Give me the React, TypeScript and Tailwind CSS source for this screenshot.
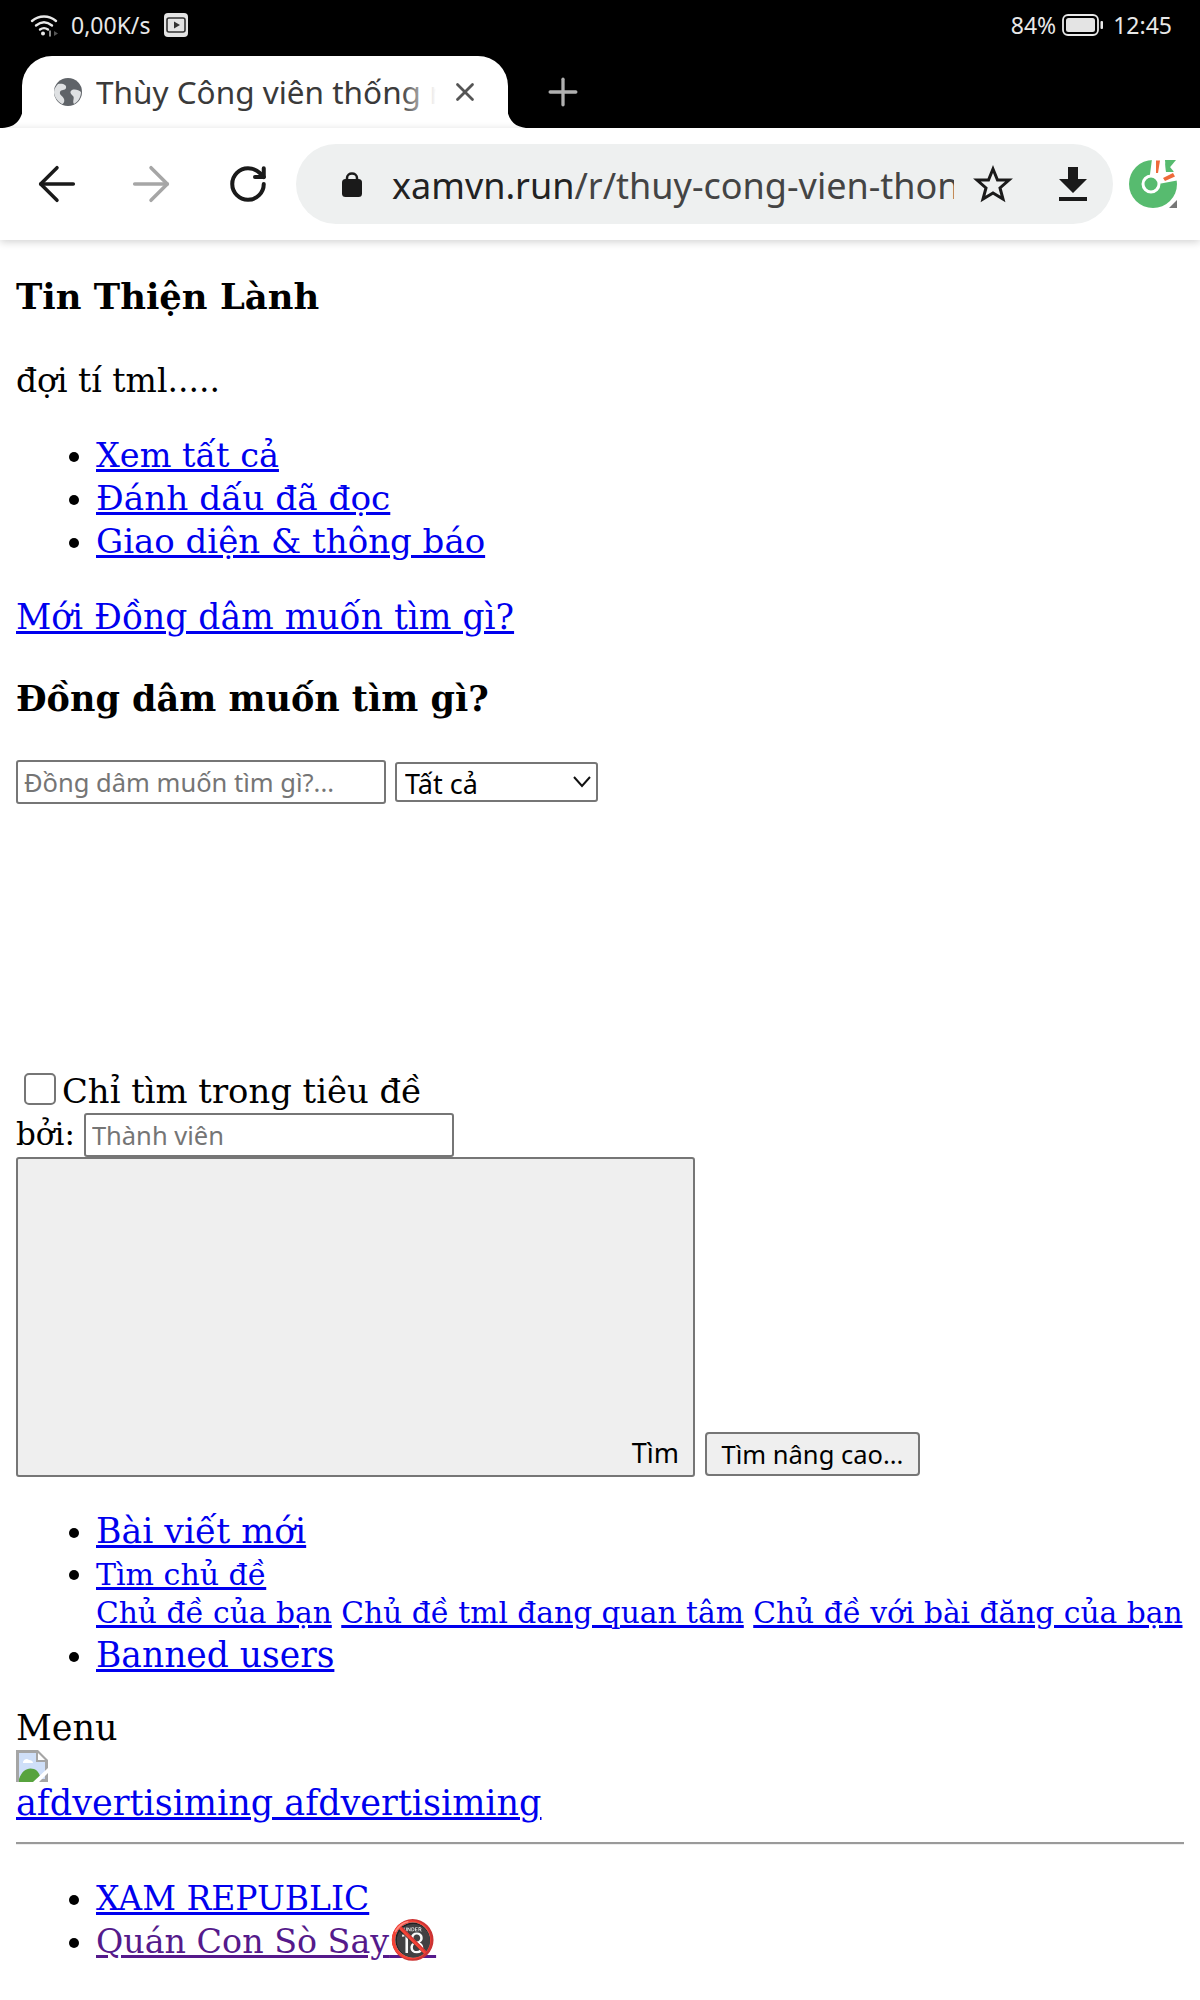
import { ArrowLeft, ArrowRight, Plus, RotateCw, X } from "lucide-react"

const linkClass = "text-[#0000ee] underline decoration-[3px]"

function WifiIcon() {
  return (
    <svg width="28" height="24" viewBox="0 0 28 24" fill="none" stroke="#e8e8e8" strokeWidth="2.4" strokeLinecap="round">
      <path d="M2 8C9 2 19 2 26 8" />
      <path d="M6 12.500C11 8.500 17 8.500 22 12.500" />
      <path d="M10 16.500C12.500 14.800 15.500 14.800 18 16.500" />
      <circle cx="13" cy="20.500" r="2" fill="#e8e8e8" stroke="none" />
      <path d="M20 18V23" stroke="#bbb" strokeWidth="1.500" />
      <path d="M24 18L28 20.500L24 23Z" fill="#555" stroke="none" />
    </svg>
  )
}

function VideoIcon() {
  return (
    <svg width="24" height="24" viewBox="0 0 24 24">
      <rect width="24" height="24" rx="4" fill="#e4e4e4" />
      <rect x="3" y="5" width="18" height="14" rx="2" fill="none" stroke="#333" strokeWidth="1.600" />
      <path d="M10 8.500L16 12L10 15.500Z" fill="#333" />
    </svg>
  )
}

function BatteryIcon() {
  return (
    <svg width="41" height="22" viewBox="0 0 41 22">
      <rect x="1" y="1" width="35" height="20" rx="5" fill="none" stroke="#e8e8e8" strokeWidth="1.800" />
      <rect x="4" y="4" width="29" height="14" rx="2.500" fill="#e4e4e4" />
      <rect x="38.500" y="7" width="2.500" height="8" rx="1" fill="#e8e8e8" />
    </svg>
  )
}

function GlobeIcon() {
  return (
    <svg width="28" height="28" viewBox="0 0 28 28">
      <circle cx="14" cy="14" r="14" fill="#5f6368" />
      <path d="M4 6C9 5 13 7 12 10C11 13 7 11 6 14C5 17 9 18 10 21C11 24 9 26 8 26C3 23 0 18 0 14C0 11 2 8 4 6Z" fill="#dfe1e3" />
      <path d="M18 12C21 11 25 12 27 14C27 19 24 24 20 26C18 23 21 20 19 18C17 16 15 14 18 12Z" fill="#dfe1e3" />
    </svg>
  )
}

function LockIcon() {
  return (
    <svg width="20" height="26" viewBox="0 0 20 26">
      <path d="M5 9V7C5 1 15 1 15 7V9" fill="none" stroke="#1a1a1a" strokeWidth="2.500" />
      <rect y="8" width="20" height="18" rx="3.500" fill="#1a1a1a" />
    </svg>
  )
}

function StarIcon() {
  return (
    <svg width="40" height="38" viewBox="0 0 40 38">
      <path d="M20 4L24.500 15H36L27 23L30 34L20 28L10 34L13 23L4 15H15.500Z" fill="none" stroke="#1a1a1a" strokeWidth="3" strokeLinejoin="miter" />
    </svg>
  )
}

function DownloadIcon() {
  return (
    <svg width="28" height="38" viewBox="0 0 28 38">
      <path d="M9 2H19V14H28L14 28L0 14H9Z" fill="#1a1a1a" />
      <rect y="32" width="28" height="4" fill="#1a1a1a" />
    </svg>
  )
}

function CocCocLogo() {
  return (
    <svg width="48" height="48" viewBox="0 0 48 48">
      <circle cx="24" cy="24" r="24" fill="#57bb6f" />
      <path d="M20 22L23 -1H36L37 12H50V20L24 25Z" fill="#fff" />
      <path d="M36 0H47L37 12Z" fill="#57bb6f" />
      <circle cx="22" cy="24" r="8" fill="#57bb6f" stroke="#fff" strokeWidth="3" />
      <path d="M27 0.500H31L29 13H27Z" fill="#ee6a3a" />
      <path d="M34 18L44 13L46 16.500L36 21Z" fill="#ee6a3a" />
      <path d="M48 40V48H40Z" fill="#777" />
    </svg>
  )
}

function BrokenImage() {
  return (
    <svg width="32" height="32" viewBox="0 0 32 32" className="block">
      <path d="M0 0H22L32 10V32H0Z" fill="#a5a5a5" />
      <path d="M3 3H20V12H29V29H3Z" fill="#cfdff8" />
      <path d="M7 12C8 9 11 8 13 10C15 10 17 11 17 13H7Z" fill="#fff" />
      <path d="M22 3L29 10H22Z" fill="#fff" />
      <path d="M3 29C6 20 12 17 18 19C21 20 23 23 24 26L20 32H3Z" fill="#57a33e" />
      <path d="M17 32L32 18V23L23 32Z" fill="#fff" />
    </svg>
  )
}

function Bullet({ children }: { children: React.ReactNode }) {
  return <li className="h-[43px] leading-[43px] list-disc">{children}</li>
}

export default function App() {
  return (
    <div className="w-[1200px] h-[2000px] overflow-hidden bg-white text-black font-['DejaVu_Serif',serif] text-[33px]">
      <header className="bg-black h-[128px] font-['Noto_Sans',sans-serif]">
        <div className="h-[50px] pl-[30px] pr-[28px] flex items-center justify-between text-[#e8e8e8] text-[23px]">
          <div className="flex items-center">
            <WifiIcon />
            <span className="ml-[13px]">0,00K/s</span>
            <span className="ml-[14px]"><VideoIcon /></span>
          </div>
          <div className="flex items-center">
            <span>84%</span>
            <span className="ml-[6px]"><BatteryIcon /></span>
            <span className="ml-[10px]">12:45</span>
          </div>
        </div>
        <div className="mt-[6px] flex items-center h-[72px]">
          <div className="relative ml-[22px] w-[486px] h-[72px] bg-white rounded-t-[30px] flex items-center pl-[32px]">
            <svg width="24" height="24" viewBox="0 0 24 24" className="absolute left-[-22px] bottom-0">
              <path d="M24 0V24H0C14 24 22 18 24 0Z" fill="#fff" />
            </svg>
            <svg width="24" height="24" viewBox="0 0 24 24" className="absolute right-[-22px] bottom-0">
              <path d="M0 0V24H24C10 24 2 18 0 0Z" fill="#fff" />
            </svg>
            <GlobeIcon />
            <div className="relative ml-[14px] w-[340px] overflow-hidden whitespace-nowrap text-[31.500px] text-[#3a3a3a]">
              Thùy Công viên thống nhất
              <div className="absolute right-0 top-0 bottom-0 w-[36px] bg-gradient-to-r from-white/0 to-white" />
            </div>
            <X className="ml-[14px] text-[#555]" size={30} strokeWidth={2.200} />
          </div>
          <Plus className="ml-[33px] text-[#b0b0b0]" size={44} strokeWidth={1.800} />
        </div>
      </header>

      <nav className="h-[112px] bg-white shadow-[0_2px_8px_rgba(0,0,0,0.18)] flex items-center relative">
        <ArrowLeft className="ml-[29px] text-[#1a1a1a]" size={56} strokeWidth={1.500} />
        <ArrowRight className="ml-[38px] text-[#a6a6a6]" size={56} strokeWidth={1.500} />
        <RotateCw className="ml-[48px] text-[#1a1a1a]" size={42} strokeWidth={2.300} />
        <div className="ml-[27px] w-[817px] h-[80px] rounded-full bg-[#eef0f0] flex items-center pl-[46px] font-['Noto_Sans',sans-serif]">
          <LockIcon />
          <div className="ml-[30px] mt-[4px] w-[562px] overflow-hidden whitespace-nowrap text-[36px] text-[#444]">
            <span className="text-[#222]">xamvn.run</span>/r/thuy-cong-vien-thong-nhat
          </div>
          <span className="ml-[19px]"><StarIcon /></span>
          <span className="ml-[46px]"><DownloadIcon /></span>
        </div>
        <span className="ml-[16px]"><CocCocLogo /></span>
      </nav>

      <main className="px-4">
        <h1 className="mt-[35px] h-[44px] leading-[44px] font-bold text-[35.400px]">Tin Thiện Lành</h1>
        <p className="mt-[40px] h-[44px] leading-[44px]">đợi tí tml.....</p>
        <ul className="mt-[31px] pl-[80px]">
          <Bullet><a className={`${linkClass} text-[33.500px]`}>Xem tất cả</a></Bullet>
          <Bullet><a className={`${linkClass} text-[34.300px]`}>Đánh dấu đã đọc</a></Bullet>
          <Bullet><a className={`${linkClass} text-[34px]`}>Giao diện &amp; thông báo</a></Bullet>
        </ul>
        <div className="mt-[32px] h-[44px] leading-[44px]"><a className={`${linkClass} text-[34.500px]`}>Mới Đồng dâm muốn tìm gì?</a></div>
        <h2 className="mt-[38px] h-[44px] leading-[44px] font-bold text-[35px]">Đồng dâm muốn tìm gì?</h2>

        <form className="font-['Noto_Sans',sans-serif] text-[25.500px]">
          <div className="mt-[39px] flex items-center gap-[9px]">
            <input
              placeholder="Đồng dâm muốn tìm gì?..."
              className="w-[370px] h-[44px] px-[6px] border-2 border-[#767676] rounded-[3px] placeholder:text-[#757575] outline-none"
            />
            <div className="relative w-[203px] h-[40px]">
              <select className="w-full h-full pl-[8px] text-[27px] appearance-none border-2 border-[#767676] rounded-[3px] bg-white outline-none">
                <option>Tất cả</option>
              </select>
              <svg width="20" height="12" viewBox="0 0 20 12" className="absolute right-[6px] top-[14px]" fill="none" stroke="#111" strokeWidth="2">
                <path d="M2 1L10 10L18 1" />
              </svg>
            </div>
          </div>
          <div className="mt-[265px] h-[44px] flex items-center font-['DejaVu_Serif',serif] text-[33.800px] leading-[44px]">
            <input type="checkbox" className="ml-[8px] -mt-[4px] w-[32px] h-[32px] appearance-none border-2 border-[#767676] rounded-[5px] bg-white" />
            <span className="ml-[6px] mt-[2px]">Chỉ tìm trong tiêu đề</span>
          </div>
          <div className="h-[44px] flex items-center">
            <span className="font-['DejaVu_Serif',serif] text-[31px] -mt-[2px]">bởi:</span>
            <input
              placeholder="Thành viên"
              className="ml-[9px] w-[370px] h-[44px] px-[6px] border-2 border-[#767676] rounded-[3px] placeholder:text-[#757575] outline-none"
            />
          </div>
          <div className="flex items-end gap-[10px]">
            <button type="button" className="w-[679px] h-[320px] flex items-end justify-end pr-[14px] pb-[2px] text-[27px] bg-[#efefef] border-2 border-[#767676] rounded-[3px]">Tìm</button>
            <button type="button" className="w-[215px] h-[44px] bg-[#efefef] border-2 border-[#767676] rounded-[4px] mb-px">Tìm nâng cao...</button>
          </div>
        </form>

        <ul className="mt-[32px] pl-[80px]">
          <li className="h-[44px] leading-[44px] list-disc"><a className={`${linkClass} text-[34.700px]`}>Bài viết mới</a></li>
          <li className="list-disc -mt-[4px]">
            <div className="h-[44px] leading-[44px]"><a className={`${linkClass} text-[30px]`}>Tìm chủ đề</a></div>
            <div className="h-[35px] leading-[35px] whitespace-nowrap -mt-[1px] text-[29.700px]">
              <a className={linkClass}>Chủ đề của bạn</a> <a className={linkClass}>Chủ đề tml đang quan tâm</a> <a className={linkClass}>Chủ đề với bài đăng của bạn</a>
            </div>
          </li>
          <li className="h-[44px] leading-[44px] list-disc mt-[3px]"><a className={`${linkClass} text-[34.500px]`}>Banned users</a></li>
        </ul>

        <div className="mt-[29px] h-[44px] leading-[44px] text-[35px]">Menu</div>
        <BrokenImage />
        <div className="mt-px h-[40px] leading-[40px]"><a className={`${linkClass} text-[35px]`}>afdvertisiming afdvertisiming</a></div>
        <div className="mt-[19px] h-[3px] border-t-2 border-b border-t-[#9a9a9a] border-b-[#eeeeee]" />
        <ul className="mt-[32px] pl-[80px]">
          <Bullet><a className={linkClass}>XAM REPUBLIC</a></Bullet>
          <Bullet><a className="text-[#551a8b] underline decoration-[3px] text-[33.300px]">Quán Con Sò Say<span className="text-[38px] leading-[38px]">🔞</span></a></Bullet>
        </ul>
      </main>
    </div>
  )
}
